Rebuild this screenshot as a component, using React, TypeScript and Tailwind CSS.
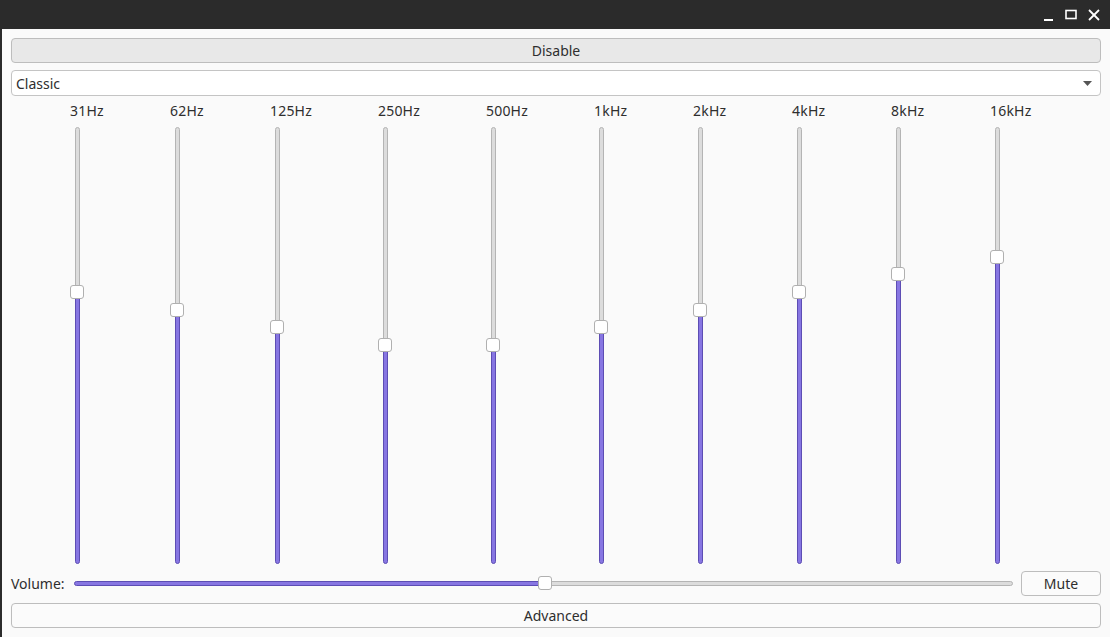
import React from "react";

// handle center offset (px) from top of each track
const bands = [
  { label: "31Hz", y: 165, ml: "ml-[26px]" },
  { label: "62Hz", y: 183, ml: "ml-[20px]" },
  { label: "125Hz", y: 200, ml: "ml-[20px]" },
  { label: "250Hz", y: 218, ml: "ml-[28px]" },
  { label: "500Hz", y: 218, ml: "ml-[28px]" },
  { label: "1kHz", y: 200, ml: "ml-[28px]" },
  { label: "2kHz", y: 183, ml: "ml-[19px]" },
  { label: "4kHz", y: 165, ml: "ml-[19px]" },
  { label: "8kHz", y: 147, ml: "ml-[19px]" },
  { label: "16kHz", y: 130, ml: "ml-[19px]" },
];

function Band({ label, y, ml }: { label: string; y: number; ml: string }) {
  return (
    <div className={`w-[80px] flex flex-col items-start pl-[33px] ${ml}`}>
      <div className="h-[20px] leading-[20px] text-[14px] tracking-[0.2px] text-[#2e2e2e] whitespace-nowrap">{label}</div>
      <div className="relative mt-[6px] w-[14px] h-[437px] flex justify-center">
        <div className="w-[5px] h-full flex flex-col">
          <div className="bg-[#dcdcdc] border border-[#b4b4b4] rounded-t-[3px]" style={{ height: y }} />
          <div className="flex-1 bg-[#8776e2] border border-[#5d4db4] rounded-b-[3px]" />
        </div>
        <div
          className="absolute left-0 w-[14px] h-[14px] bg-white border border-[#b0b0b0] rounded-[3px]"
          style={{ top: y - 7 }}
        />
      </div>
    </div>
  );
}

export default function App() {
  return (
    <div className="w-[1110px] h-[637px] bg-[#2b2b2b] flex flex-col overflow-hidden" style={{ fontFamily: '"Noto Sans", "Open Sans", sans-serif' }}>
      {/* Title bar */}
      <div className="h-[29px] flex items-center justify-end gap-[11px] pr-[10px] text-white">
        <svg width="11" height="12" viewBox="0 0 11 12"><rect x="1" y="10" width="9" height="2" fill="#fff" /></svg>
        <svg width="12" height="12" viewBox="0 0 12 12" fill="none" stroke="#fff" strokeWidth="1.6"><rect x="1" y="1.5" width="10" height="8" /></svg>
        <svg width="12" height="12" viewBox="0 0 12 12" stroke="#fff" strokeWidth="1.8"><line x1="1" y1="1" x2="11" y2="11" /><line x1="11" y1="1" x2="1" y2="11" /></svg>
      </div>

      {/* Body */}
      <div className="flex-1 ml-[2px] bg-[#fafafa] flex flex-col px-[9px] pt-[9px] text-[14px] text-[#2e2e2e]">
        <button className="h-[25px] w-full bg-[#e8e8e8] border border-[#bdbdbd] rounded-[4px] text-[14px] text-[#2e2e2e]">Disable</button>

        <div className="mt-[7px] h-[26px] bg-white border border-[#c4c4c4] rounded-[4px] flex items-center justify-between pl-[4px] pr-[8px]">
          <span>Classic</span>
          <svg width="9" height="5" viewBox="0 0 9 5"><polygon points="0,0 9,0 4.5,5" fill="#555" /></svg>
        </div>

        <div className="mt-[5px] flex">
          {bands.map(b => <Band key={b.label} {...b} />)}
        </div>

        {/* Volume */}
        <div className="mt-[6px] h-[26px] flex items-center">
          <span className="w-[63px]">Volume:</span>
          <div className="relative w-[939px] h-[14px] flex items-center">
            <div className="w-full h-[5px] flex">
              <div className="w-[471px] bg-[#8776e2] border border-[#5d4db4] rounded-l-[3px]" />
              <div className="flex-1 bg-[#dcdcdc] border border-[#b4b4b4] rounded-r-[3px]" />
            </div>
            <div className="absolute left-[464px] top-0 w-[14px] h-[14px] bg-white border border-[#b0b0b0] rounded-[3px]" />
          </div>
          <button className="ml-auto w-[80px] h-[25px] bg-[#fbfbfb] border border-[#bdbdbd] rounded-[4px] text-[14px] text-[#2e2e2e]">Mute</button>
        </div>

        <button className="mt-[7px] h-[25px] w-full bg-[#fbfbfb] border border-[#bdbdbd] rounded-[4px] text-[14px] text-[#2e2e2e]">Advanced</button>
      </div>
    </div>
  );
}
